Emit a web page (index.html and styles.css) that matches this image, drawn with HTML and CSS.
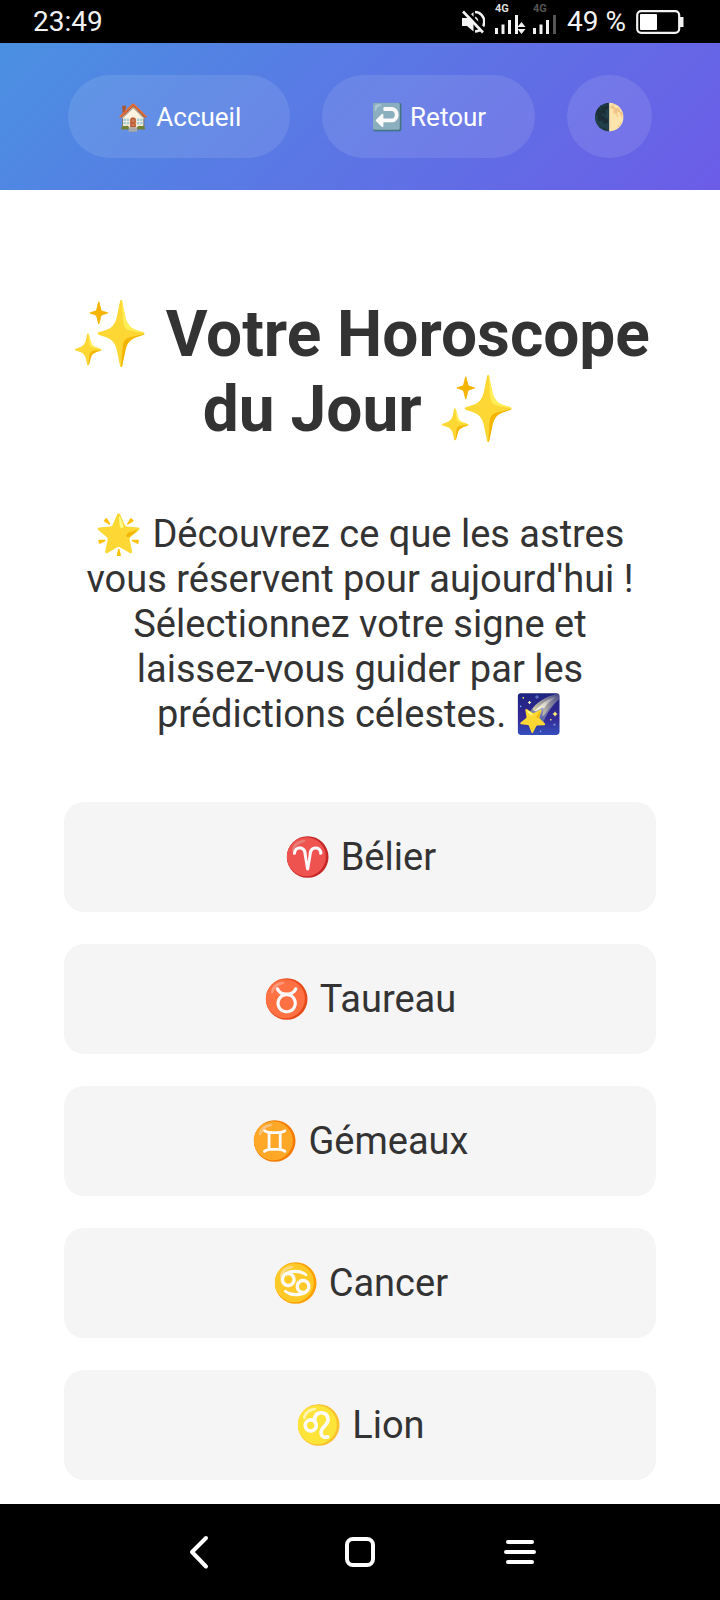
FILE: index.html
```html
<!DOCTYPE html>
<html lang="fr">
<head>
<meta charset="utf-8">
<meta name="viewport" content="width=device-width, initial-scale=1">
<title>Votre Horoscope du Jour</title>
<link rel="stylesheet" href="styles.css">
</head>
<body>
<div class="status">
  <span class="clock">23:49</span>
  <div class="status-icons">
    <svg class="mute" width="24" height="26" viewBox="0 0 24 26" fill="none" stroke="#f2f2f2">
      <path d="M1 9h5l6.500-6v19.500L6 17H1z" fill="#f2f2f2" stroke="none"/>
      <path d="M14 8.500a5 5 0 0 1 0 8" stroke-width="2.500"/>
      <path d="M14 3a9 9.500 0 0 1 0 19.500" stroke-width="2.500"/>
      <path d="M2 0l22 22" stroke="#000" stroke-width="4"/>
      <path d="M2 2.500l20 21" stroke-width="2.600"/>
    </svg>
    <svg class="signal" width="32" height="32" viewBox="0 0 32 32">
      <text x="0" y="9" class="net">4G</text>
      <path d="M0 25h3v6H0zM6.500 21.500h3V31h-3zM13 17h3v14h-3zM20 12h3v19h-3zM26.500 19l4 5h-8zM26.500 31l-4-5h8z" fill="#f2f2f2"/>
    </svg>
    <svg class="signal" width="24" height="32" viewBox="0 0 24 32">
      <text x="0" y="9" class="net net-off">4G</text>
      <path d="M0 25h3v6H0zM6.500 21.500h3V31h-3zM13 17h3v14h-3z" fill="#f2f2f2"/>
      <path d="M20 12h3v19h-3z" fill="#555"/>
    </svg>
    <span class="level">49 %</span>
    <svg width="48" height="24" viewBox="0 0 48 24">
      <rect x="1.200" y="1.200" width="42" height="21.600" rx="4" fill="none" stroke="#f2f2f2" stroke-width="2.200"/>
      <rect x="4" y="4" width="17" height="16" rx="1" fill="#fff"/>
      <path d="M44 7h3.500v10H44z" fill="#f2f2f2"/>
    </svg>
  </div>
</div>
<header class="bar">
  <button class="pill" type="button">🏠 Accueil</button>
  <button class="pill" type="button">↩️ Retour</button>
  <button class="pill pill-round" type="button" aria-label="Changer de thème">🌓</button>
</header>
<main class="page">
  <h1 class="title">✨ Votre Horoscope du Jour ✨</h1>
  <p class="intro">🌟 Découvrez ce que les astres vous réservent pour aujourd'hui ! Sélectionnez votre signe et laissez-vous guider par les prédictions célestes. 🌠</p>
  <div class="signs">
    <button class="sign" type="button">♈ Bélier</button>
    <button class="sign" type="button">♉ Taureau</button>
    <button class="sign" type="button">♊ Gémeaux</button>
    <button class="sign" type="button">♋ Cancer</button>
    <button class="sign" type="button">♌ Lion</button>
  </div>
</main>
<nav class="nav">
  <button class="nav-btn" type="button" aria-label="Précédent"><svg width="36" height="36" viewBox="0 0 36 36" fill="none" stroke="#fff" stroke-width="4" stroke-linecap="round" stroke-linejoin="round"><path d="M24 4L10 18l14 14.500"/></svg></button>
  <button class="nav-btn" type="button" aria-label="Écran d'accueil"><svg width="36" height="36" viewBox="0 0 36 36" fill="none" stroke="#fff" stroke-width="4"><rect x="5" y="5" width="26" height="26" rx="6"/></svg></button>
  <button class="nav-btn" type="button" aria-label="Applications récentes"><svg width="36" height="36" viewBox="0 0 36 36" fill="none" stroke="#fff" stroke-width="4" stroke-linecap="round"><path d="M6 8h24M4 18h28M6 28h24"/></svg></button>
</nav>
</body>
</html>
```
FILE: styles.css
```css
* { box-sizing: border-box; }
body {
  margin: 0;
  min-height: 100vh;
  display: flex;
  flex-direction: column;
  background: #fff;
  color: #333;
  font-family: Roboto, "Noto Color Emoji", sans-serif;
}
button {
  border: 0;
  font-family: inherit;
  color: inherit;
}
.status {
  display: flex;
  justify-content: space-between;
  align-items: center;
  height: 43px;
  padding: 0 36px 0 33px;
  background: #000;
  color: #f2f2f2;
  font-size: 28px;
  line-height: 44px;
}
.status-icons { display: flex; align-items: center; gap: 10px; }
.signal { margin-bottom: 6px; }
.signal + .signal { margin-left: -4px; }
.net { font-size: 11px; font-weight: 700; fill: #ddd; }
.net-off { fill: #555; }
.bar {
  display: flex;
  justify-content: center;
  gap: 32px;
  padding: 32px;
  background: linear-gradient(135deg, #4a90e2, #6c5ce7);
}
.pill {
  padding: 27px 49px 25px;
  border-radius: 42px;
  background: rgba(255, 255, 255, 0.1);
  color: #fff;
  font-size: 26px;
  line-height: 31px;
}
.pill-round { padding: 27px 26px 25px; }
.page {
  flex: 1;
  padding: 107px 64px 24px;
  text-align: center;
}
.title {
  margin: 0 0 65px;
  font-size: 64px;
  line-height: 75px;
}
.intro {
  margin: 0 0 65px;
  padding: 0 8px;
  font-size: 38px;
  line-height: 45px;
}
.signs { display: grid; gap: 32px; }
.sign {
  padding: 32px;
  border-radius: 20px;
  background: #f5f5f5;
  font-size: 38px;
  line-height: 46px;
}
.nav {
  display: flex;
  justify-content: center;
  align-items: center;
  gap: 100px;
  height: 96px;
  background: #000;
}
.nav-btn {
  display: grid;
  place-items: center;
  width: 60px;
  height: 60px;
  padding: 0;
  background: none;
}
```
